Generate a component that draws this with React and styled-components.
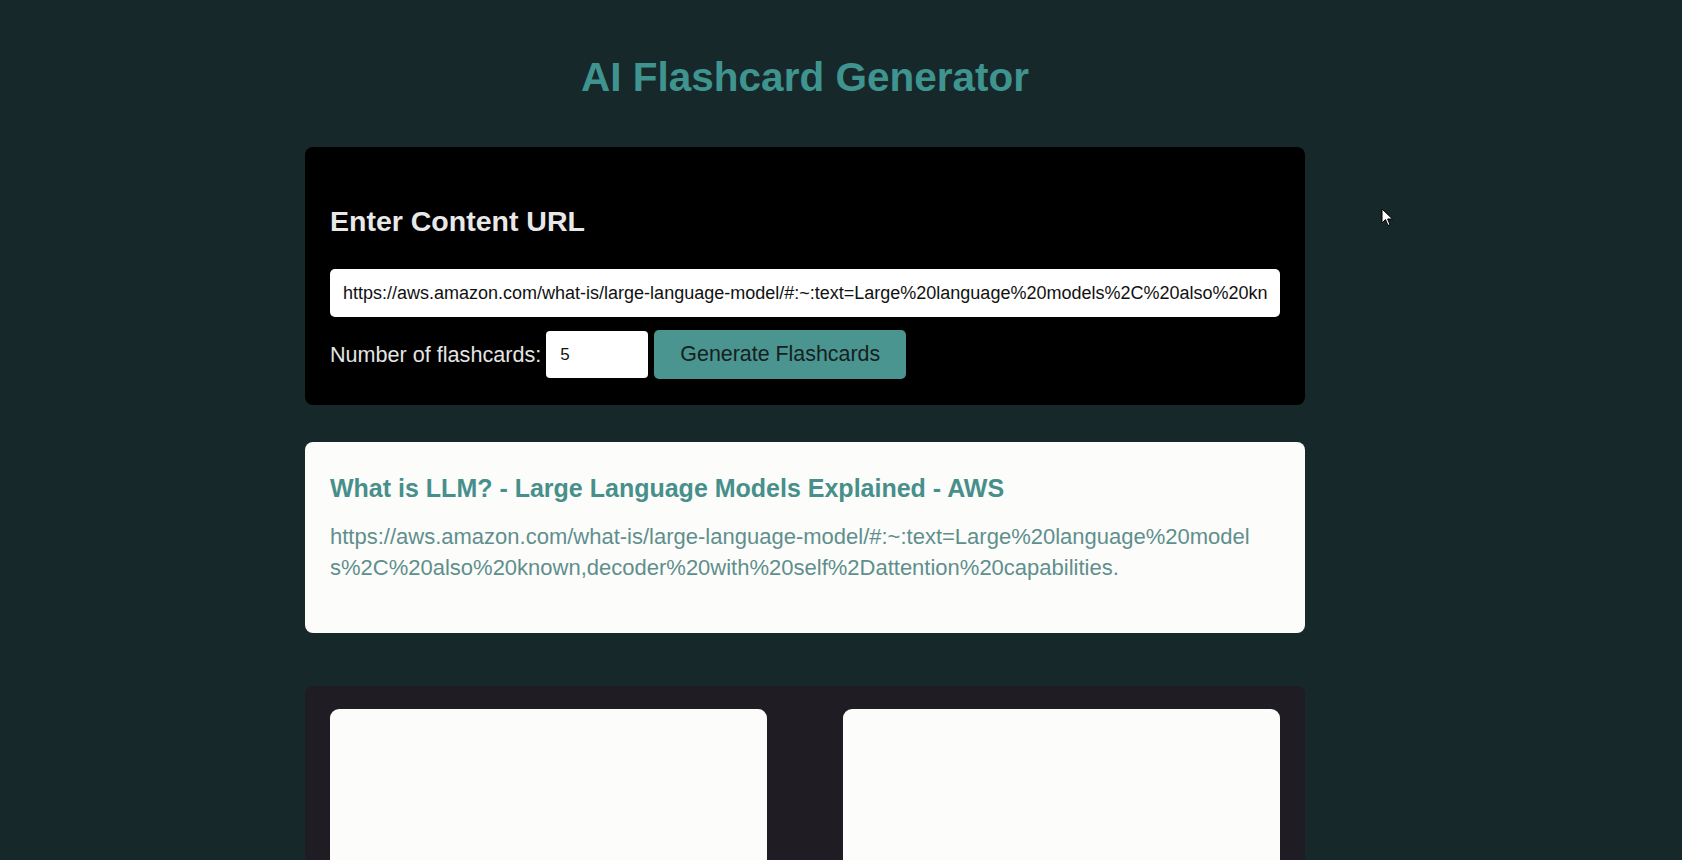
import styled, { createGlobalStyle } from "styled-components";

const GlobalStyle = createGlobalStyle`
  body {
    margin: 0;
    background: #17282b;
    font-family: "Century Gothic", "Liberation Sans", Arial, sans-serif;
  }
`;

const Page = styled.div`
  position: relative;
  min-height: 860px;
  display: flex;
  flex-direction: column;
  align-items: center;
  padding-right: 72px;
  overflow: hidden;
`;

const Heading = styled.h1`
  margin: 53px 0 0;
  font-size: 40.5px;
  line-height: 48px;
  font-weight: bold;
  color: #3f9490;
`;

const Content = styled.main`
  width: 1000px;
  display: flex;
  flex-direction: column;
`;

const FormCard = styled.section`
  margin-top: 46px;
  background: #000;
  border-radius: 8px;
  padding: 25px 25px 26px;
`;

const FormTitle = styled.h2`
  margin: 32px 0 31px;
  font-size: 28.5px;
  line-height: 34px;
  font-weight: bold;
  color: #e8e8e8;
`;

const UrlInput = styled.input`
  display: block;
  box-sizing: border-box;
  width: 100%;
  height: 48px;
  border: none;
  border-radius: 5px;
  padding: 0 13px;
  background: #fff;
  color: #111;
  font-family: inherit;
  font-size: 18px;
  outline: none;
`;

const Row = styled.div`
  margin-top: 13px;
  display: flex;
  align-items: center;
`;

const Label = styled.label`
  color: #e4e4e4;
  font-size: 21.6px;
  margin-right: 5px;
`;

const CountInput = styled.input`
  box-sizing: border-box;
  width: 102px;
  height: 47px;
  border: none;
  border-radius: 4px;
  padding: 0 14px;
  background: #fff;
  color: #111;
  font-family: inherit;
  font-size: 17px;
  outline: none;
`;

const GenerateButton = styled.button`
  margin-left: 6px;
  width: 252px;
  height: 49px;
  border: none;
  border-radius: 5px;
  background: #4a958f;
  color: #16201f;
  font-family: inherit;
  font-size: 21.4px;
  cursor: pointer;
`;

const SourceCard = styled.section`
  margin-top: 37px;
  background: #fcfcfa;
  border-radius: 8px;
  padding: 31px 25px 50px;
`;

const SourceTitle = styled.h3`
  margin: 0;
  font-size: 25px;
  line-height: 30px;
  font-weight: bold;
  color: #478f8b;
`;

const SourceUrl = styled.p`
  margin: 18px 0 0;
  font-size: 22px;
  line-height: 31px;
  color: #5f8f8d;
  word-break: break-all;
`;

const CardGrid = styled.section`
  margin-top: 53px;
  background: #1f1c23;
  border-radius: 8px;
  padding: 23px 25px 0;
  display: grid;
  grid-template-columns: 1fr 1fr;
  column-gap: 76px;
`;

const Flashcard = styled.div`
  height: 320px;
  background: #fcfcfa;
  border-radius: 9px;
`;

const Cursor = styled.svg`
  position: absolute;
  left: 1381px;
  top: 208px;
  width: 13px;
  height: 19px;
`;

const url =
  "https://aws.amazon.com/what-is/large-language-model/#:~:text=Large%20language%20models%2C%20also%20known,decoder%20with%20self%2Dattention%20capabilities.";

export default function App() {
  return (
    <Page>
      <GlobalStyle />
      <Heading>AI Flashcard Generator</Heading>
      <Content>
        <FormCard>
          <FormTitle>Enter Content URL</FormTitle>
          <UrlInput type="text" defaultValue={url} />
          <Row>
            <Label>Number of flashcards:</Label>
            <CountInput type="text" defaultValue="5" />
            <GenerateButton>Generate Flashcards</GenerateButton>
          </Row>
        </FormCard>
        <SourceCard>
          <SourceTitle>What is LLM? - Large Language Models Explained - AWS</SourceTitle>
          <SourceUrl>{url}</SourceUrl>
        </SourceCard>
        <CardGrid>
          <Flashcard />
          <Flashcard />
        </CardGrid>
      </Content>
      <Cursor viewBox="0 0 13 19">
        <path d="M1 1 L1 15 L4.5 11.5 L7 17.5 L9 16.6 L6.6 11 L11.5 11 Z" fill="#fff" stroke="#000" strokeWidth="1" />
      </Cursor>
    </Page>
  );
}
